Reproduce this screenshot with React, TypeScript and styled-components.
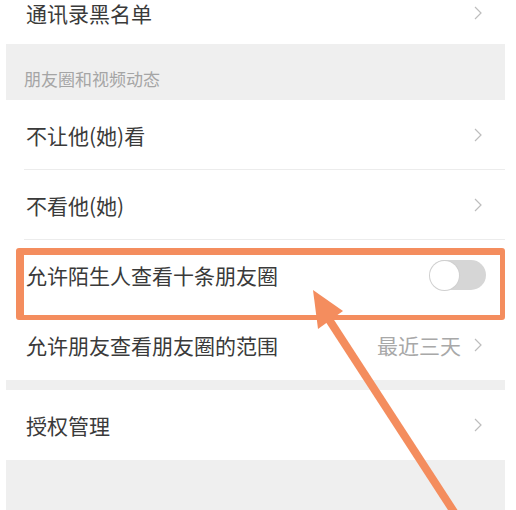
import React from "react";
import styled, { createGlobalStyle } from "styled-components";

const Global = createGlobalStyle`
  html, body { margin: 0; padding: 0; background: #ffffff; }
  body { width: 516px; height: 510px; overflow: hidden; font-family: "Noto Sans CJK SC", "Noto Sans", sans-serif; }
`;

const Page = styled.div`
  position: relative;
  width: 516px;
  height: 510px;
  overflow: hidden;
  background: #ffffff;
`;

const Column = styled.div`
  margin: -18px 11px 0 6px;
  display: flex;
  flex-direction: column;
  background: #efefef;
  min-height: 560px;
`;

const Row = styled.div<{ $divider?: boolean; $h?: number }>`
  height: ${(p) => p.$h ?? 70}px;
  box-sizing: border-box;
  display: flex;
  align-items: center;
  padding: 0 22px 0 20px;
  background: #ffffff;
  position: relative;
  ${(p) =>
    p.$divider &&
    `&::after { content: ""; position: absolute; left: 18px; right: 0; bottom: 0; height: 1px; background: #ececec; }`}
`;

const Label = styled.span`
  flex: 1;
  font-size: 21px;
  line-height: 25px;
  color: #3a3a3a;
`;

const Value = styled.span`
  font-size: 21px;
  line-height: 25px;
  color: #a8a8a8;
  margin-right: 12px;
`;

const SectionHeader = styled.div`
  height: 56px;
  box-sizing: border-box;
  display: flex;
  align-items: flex-end;
  padding: 0 0 9px 18px;
  font-size: 17px;
  color: #a5a5a5;
`;

const Gap = styled.div<{ $h: number }>`
  height: ${(p) => p.$h}px;
`;

const Track = styled.div`
  width: 56px;
  height: 30px;
  border-radius: 15px;
  background: #d6d6d6;
  display: flex;
  align-items: center;
  margin-right: -3px;
`;

const Knob = styled.div`
  width: 29px;
  height: 29px;
  border-radius: 50%;
  background: #ffffff;
  box-shadow: 0 0 0 1px #d0d0d0;
`;

const Highlight = styled.div`
  position: absolute;
  left: 16px;
  top: 248px;
  width: 489px;
  height: 72px;
  box-sizing: border-box;
  border-style: solid;
  border-color: #f48d5e;
  border-width: 7px 5px 5px 8px;
  border-radius: 3px;
  pointer-events: none;
`;

const Overlay = styled.svg`
  position: absolute;
  left: 0;
  top: 0;
  pointer-events: none;
`;

const Chevron = () => (
  <svg width="10" height="18" viewBox="0 0 10 18">
    <path d="M2 3 L8 9 L2 15" fill="none" stroke="#bdbdbd" strokeWidth="1.2" />
  </svg>
);

export default function App() {
  return (
    <>
      <Global />
      <Page>
        <Column>
          <Row $h={62}>
            <Label>通讯录黑名单</Label>
            <Chevron />
          </Row>
          <SectionHeader>朋友圈和视频动态</SectionHeader>
          <Row $divider>
            <Label>不让他(她)看</Label>
            <Chevron />
          </Row>
          <Row $divider>
            <Label>不看他(她)</Label>
            <Chevron />
          </Row>
          <Row>
            <Label>允许陌生人查看十条朋友圈</Label>
            <Track>
              <Knob />
            </Track>
          </Row>
          <Row>
            <Label>允许朋友查看朋友圈的范围</Label>
            <Value>最近三天</Value>
            <Chevron />
          </Row>
          <Gap $h={10} />
          <Row>
            <Label>授权管理</Label>
            <Chevron />
          </Row>
        </Column>
        <Highlight />
        <Overlay width="516" height="510" viewBox="0 0 516 510">
          <line x1="328" y1="318" x2="456" y2="515" stroke="#f48d5e" strokeWidth="8" />
          <polygon points="313,290 318,329 343,311" fill="#f48d5e" />
        </Overlay>
      </Page>
    </>
  );
}
